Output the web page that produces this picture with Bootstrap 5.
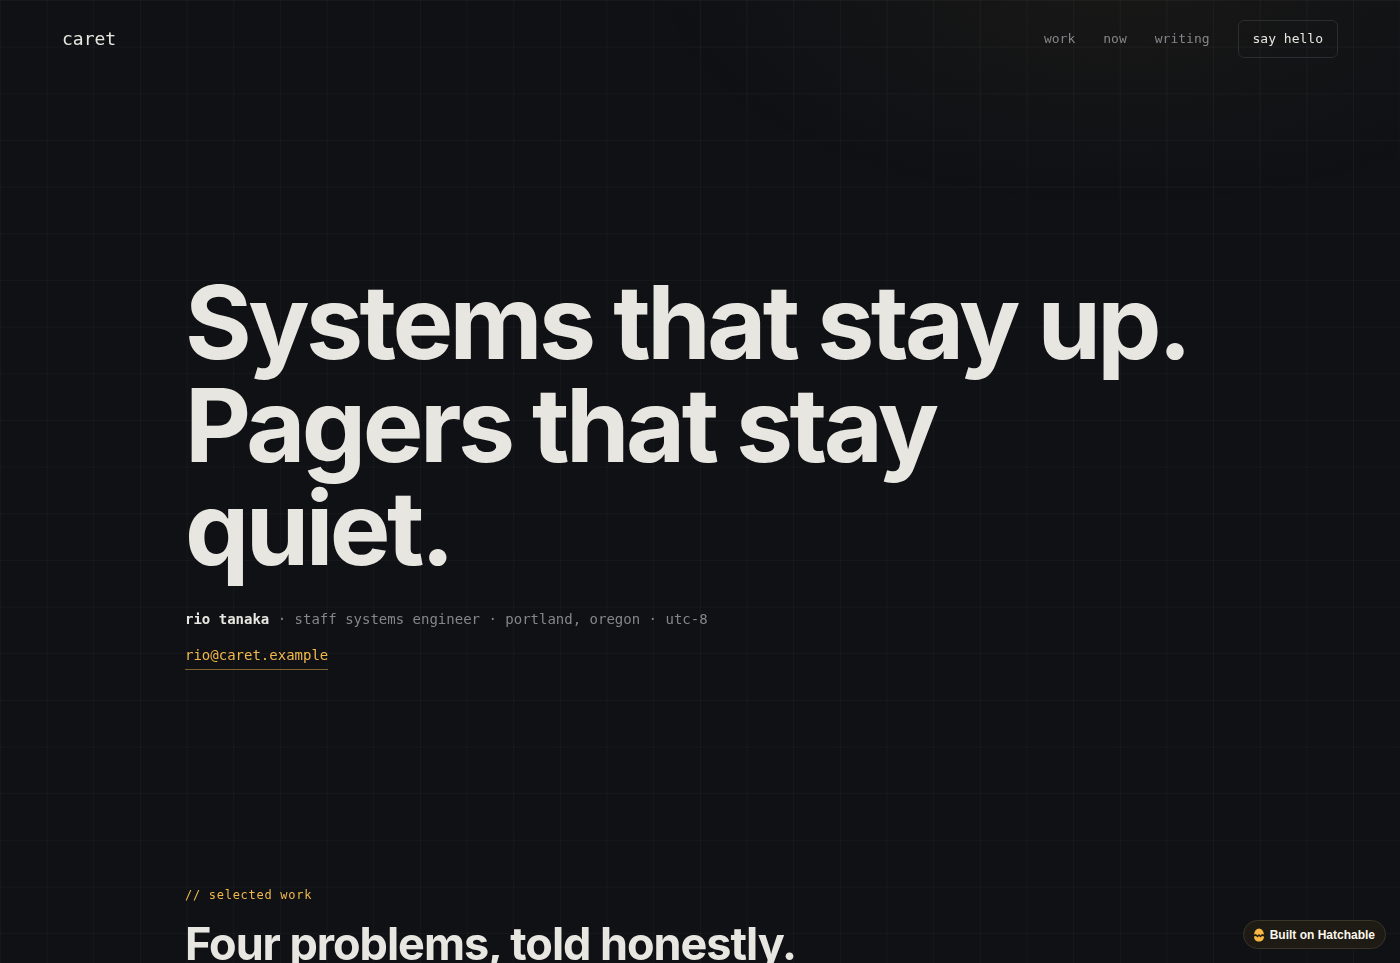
<!DOCTYPE html>
<html lang="en">
<head>
<meta charset="utf-8">
<meta name="viewport" content="width=device-width, initial-scale=1">
<title>caret</title>
<link href="https://cdn.jsdelivr.net/npm/bootstrap@5.3.0/dist/css/bootstrap.min.css" rel="stylesheet">
<style>
:root {
  --ink: #0f1115;
  --paper: #e8e6e0;
  --muted: #85858a;
  --amber: #f2b84b;
  --cell: calc(100vw / 30);
  --mono: "DejaVu Sans Mono", "Liberation Mono", monospace;
}
html { background: var(--ink); scrollbar-width: none; }
body {
  background: transparent;
  color: var(--paper);
  font-family: Inter, "Liberation Sans", sans-serif;
}
::-webkit-scrollbar { display: none; }
/* faint grid and warm glow behind everything */
.backdrop {
  z-index: -1;
  background-image:
    linear-gradient(rgba(255,255,255,.03) 1px, transparent 1px),
    linear-gradient(90deg, rgba(255,255,255,.03) 1px, transparent 1px),
    radial-gradient(ellipse 34% 24% at 80% -2%, rgba(245,185,66,.045), transparent);
  background-size: var(--cell) var(--cell), var(--cell) var(--cell), 100% 100%;
}
.mono { font-family: var(--mono); }
.topbar { padding: 20px 62px; }
.brand { font-size: 18px; line-height: 24px; color: var(--paper); }
.links { gap: 28px; font-size: 13px; line-height: 20px; }
.links a { color: var(--muted); }
.links .hello {
  color: var(--paper);
  padding: 8px 14px;
  border: 1px solid #2c2d30;
  border-radius: 6px;
}
.links .hello:hover { border-color: var(--amber); }
.column { max-width: 1030px; }
.hero { padding: 193px 0 215px; }
.hero h1 {
  font-size: 102px;
  line-height: 103px;
  font-weight: 700;
  letter-spacing: -0.035em;
  margin-bottom: 27px;
}
.who { font-size: 14px; line-height: 24px; color: var(--muted); }
.who strong { color: var(--paper); }
.mail {
  font-size: 14px;
  line-height: 24px;
  color: var(--amber);
  padding-bottom: 2px;
  border-bottom: 1px solid #7d6230;
}
.kicker { font-size: 12px; line-height: 20px; letter-spacing: .06em; color: var(--amber); }
.work h2 {
  font-size: 45px;
  line-height: 46px;
  font-weight: 700;
  letter-spacing: -0.023em;
}
.built {
  right: 14px;
  bottom: 14px;
  gap: 6px;
  padding: 0 10px;
  height: 29px;
  font: 700 12px/16px "Liberation Sans", Arial, sans-serif;
  color: #faf6ec;
  background: #1e1a14;
  border: 1px solid #3b352a;
}
</style>
</head>
<body>
<div class="backdrop position-fixed top-0 start-0 w-100 h-100"></div>

<header>
  <nav class="topbar d-flex align-items-center justify-content-between">
    <a class="brand mono text-decoration-none" href="#">caret</a>
    <div class="links mono d-flex align-items-center">
      <a class="text-decoration-none" href="#work">work</a>
      <a class="text-decoration-none" href="#now">now</a>
      <a class="text-decoration-none" href="#writing">writing</a>
      <a class="hello text-decoration-none" href="#hello">say hello</a>
    </div>
  </nav>
</header>

<main class="column mx-auto">
  <section class="hero">
    <h1>Systems that stay up. Pagers that stay quiet.</h1>
    <p class="who mono mb-2"><strong>rio tanaka</strong> · staff systems engineer · portland, oregon · utc-8</p>
    <a class="mail mono d-inline-block text-decoration-none mt-1" href="mailto:rio@caret.example">rio@caret.example</a>
  </section>
  <section class="work" id="work">
    <p class="kicker mono mb-3">// selected work</p>
    <h2>Four problems, told honestly.</h2>
  </section>
</main>

<a class="built position-fixed d-flex align-items-center rounded-pill text-decoration-none" href="#built">
  <svg width="10" height="14" viewBox="0 0 20 28" aria-hidden="true">
    <path fill="#f9b843" d="M0 13C1 5 5 1 10 1s9 4 10 12l-4-1-3 3-3-3-3 3-3-3z"/>
    <path fill="#f9b843" d="M0 17l4-1 3 3 3-3 3 3 3-3 4 1c0 6-4 10-10 10S0 23 0 17z"/>
  </svg>
  <span>Built on Hatchable</span>
</a>
<script src="https://cdn.jsdelivr.net/npm/bootstrap@5.3.0/dist/js/bootstrap.bundle.min.js"></script>
</body>
</html>
